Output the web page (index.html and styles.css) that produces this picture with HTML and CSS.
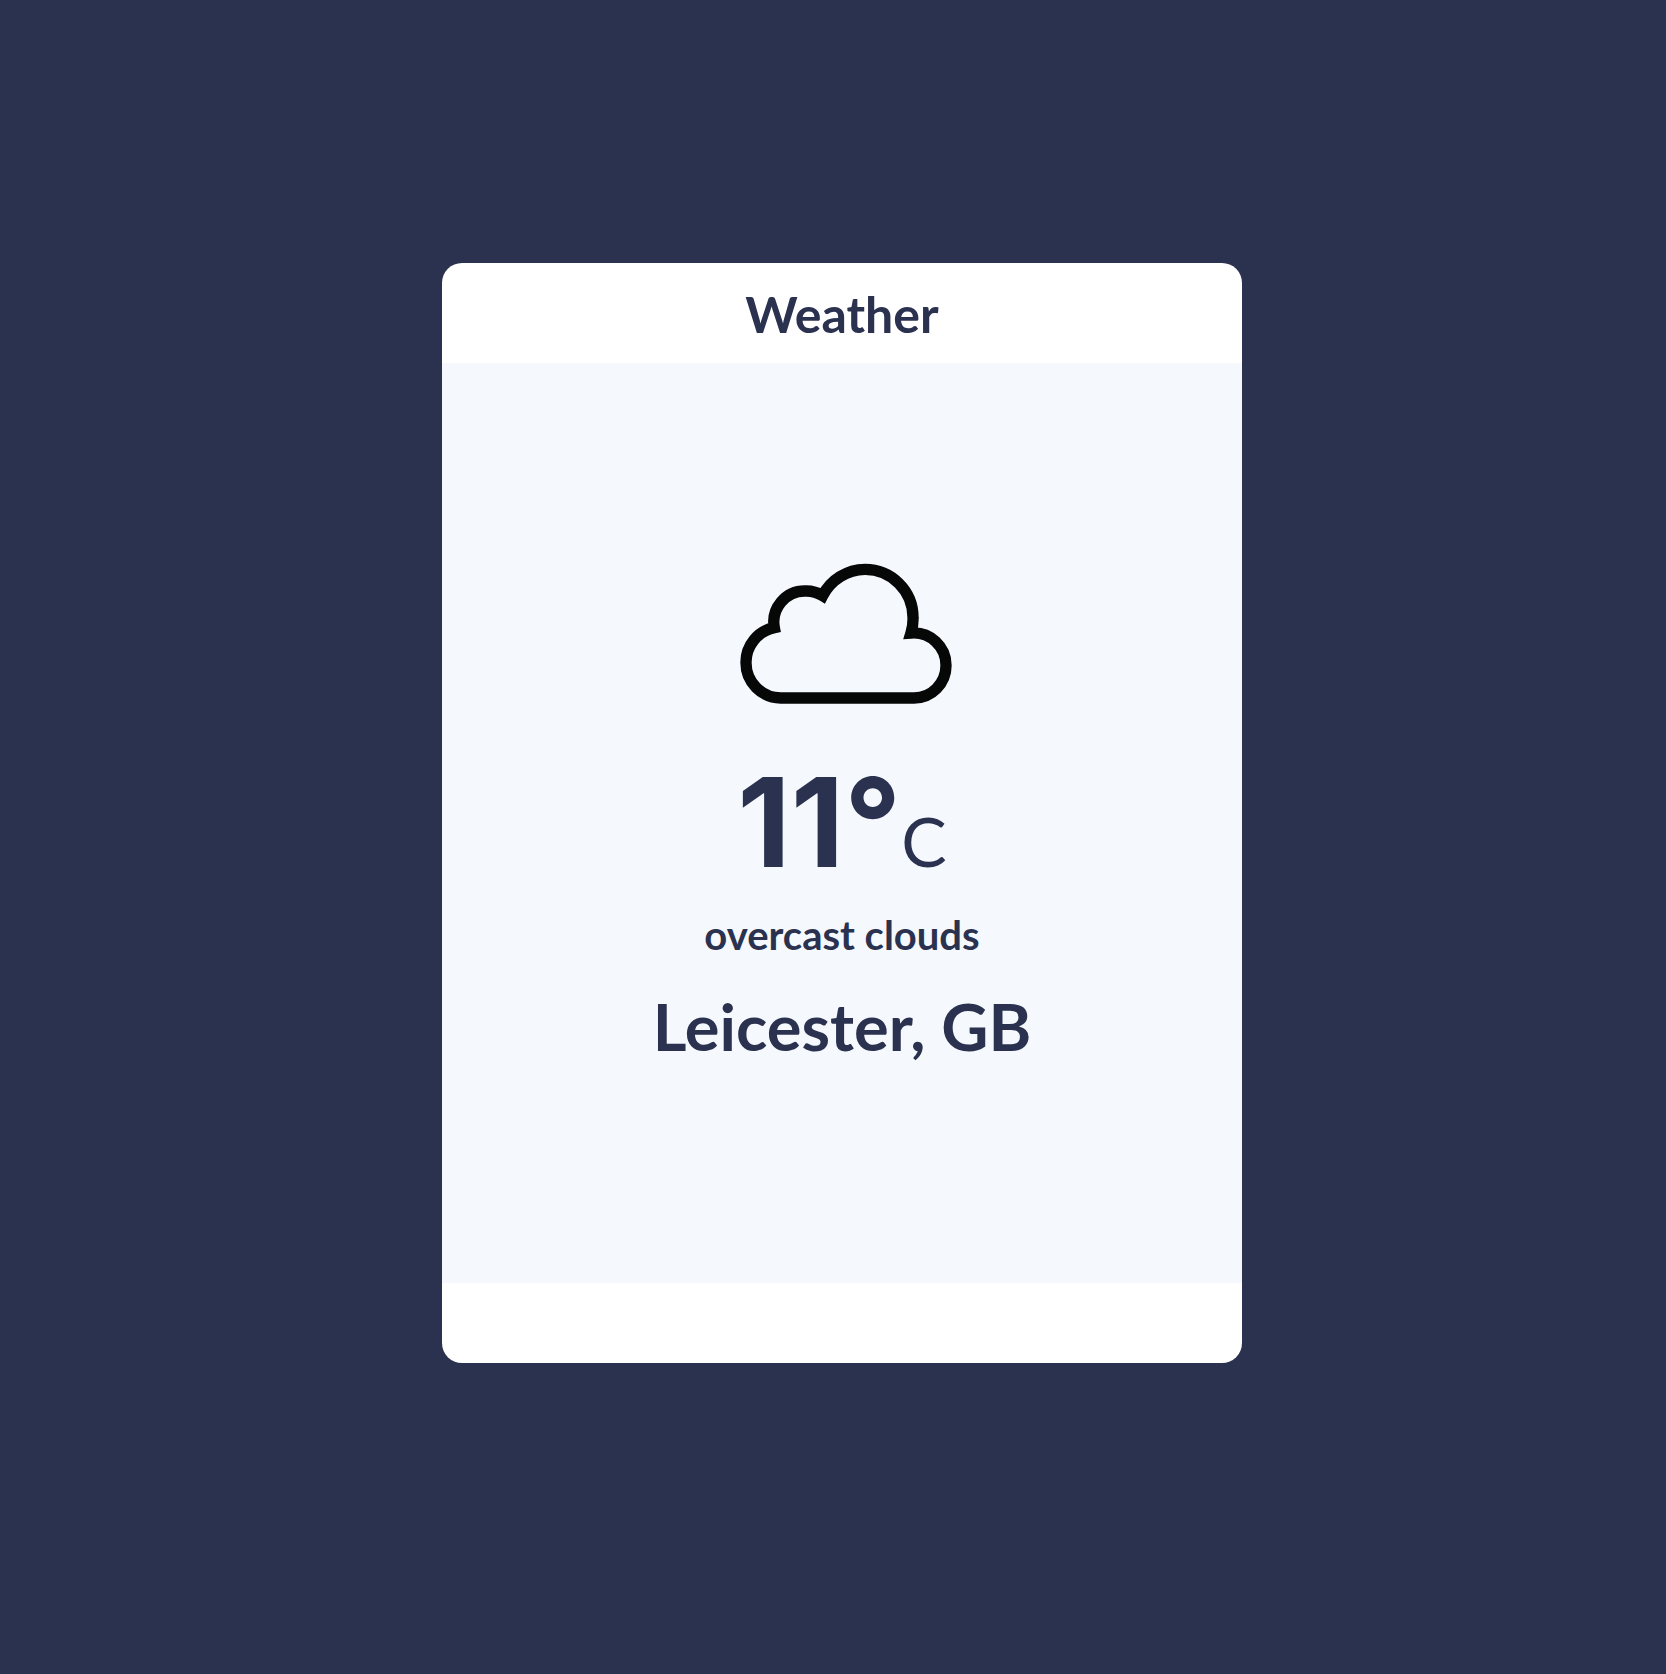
FILE: index.html
```html
<!DOCTYPE html>
<html lang="en">
<head>
<meta charset="utf-8">
<meta name="viewport" content="width=device-width, initial-scale=1">
<title>Weather</title>
<link rel="stylesheet" href="styles.css">
</head>
<body>
<article class="card">
  <header class="card-header">
    <h1 class="title">Weather</h1>
  </header>
  <main class="report">
    <svg class="icon" viewBox="0 0 732 540" role="img" aria-label="Cloudy">
      <path d="M182 474A106 106 0 0 1 78 368A106 106 0 0 1 163 263A93 93 0 0 1 256 153A93 93 0 0 1 308 167A144 144 0 0 1 435 88A144 144 0 0 1 579 232A144 144 0 0 1 573 279A97 97 0 0 1 678 377A97 97 0 0 1 582 474Z"/>
    </svg>
    <p class="temperature">11°<span class="unit">C</span></p>
    <p class="description">overcast clouds</p>
    <p class="location">Leicester, GB</p>
  </main>
  <footer class="card-footer"></footer>
</article>
</body>
</html>
```
FILE: styles.css
```css
* {
  box-sizing: border-box;
}

body {
  margin: 0;
  min-height: 100vh;
  padding: 263px 0 40px 18px;
  background: #2b324f;
  color: #2b324f;
  font-family: Lato, "Liberation Sans", sans-serif;
}

.card {
  max-width: 800px;
  margin: 0 auto;
  border-radius: 20px;
  overflow: hidden;
  background: #fff;
}

.card-header {
  padding: 21px 20px 19px;
  text-align: center;
}

.title {
  margin: 0;
  font-size: 50px;
  line-height: 60px;
  font-weight: 700;
}

.report {
  display: flex;
  flex-direction: column;
  align-items: center;
  min-height: 920px;
  padding: 177px 20px;
  background: #f5f9fe;
  text-align: center;
}

.icon {
  width: 244px;
  height: 180px;
  fill: none;
  stroke: #050807;
  stroke-width: 34;
}

.temperature {
  margin: 42px 0 0;
  font-family: Inter, Lato, sans-serif;
  font-size: 124px;
  line-height: 120px;
  font-weight: 700;
}

.unit {
  font-family: Lato, sans-serif;
  font-size: 68px;
  font-weight: 400;
}

.description {
  margin: 10px 0 0;
  font-size: 40px;
  line-height: 48px;
  font-weight: 700;
}

.location {
  margin: 27px 0 0;
  font-size: 65px;
  line-height: 80px;
  font-weight: 700;
}

.card-footer {
  height: 80px;
}
```
